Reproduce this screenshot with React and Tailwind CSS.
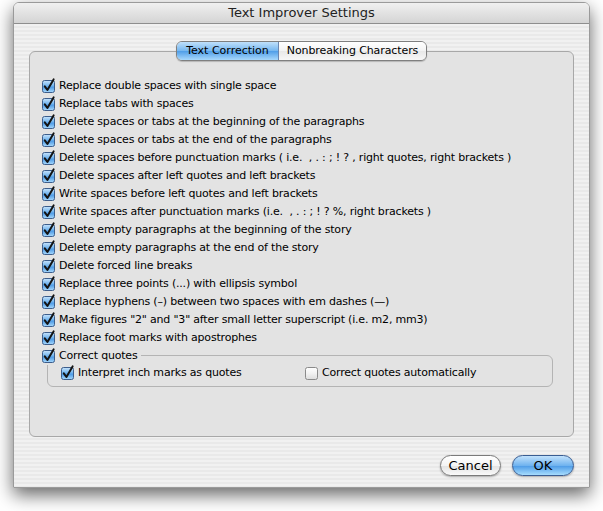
import React from 'react';

const options = [
  'Replace double spaces with single space',
  'Replace tabs with spaces',
  'Delete spaces or tabs at the beginning of the paragraphs',
  'Delete spaces or tabs at the end of the paragraphs',
  'Delete spaces before punctuation marks ( i.e.  , . : ; ! ? , right quotes, right brackets )',
  'Delete spaces after left quotes and left brackets',
  'Write spaces before left quotes and left brackets',
  'Write spaces after punctuation marks (i.e.  , . : ; ! ? %, right brackets )',
  'Delete empty paragraphs at the beginning of the story',
  'Delete empty paragraphs at the end of the story',
  'Delete forced line breaks',
  'Replace three points (...) with ellipsis symbol',
  'Replace hyphens (–) between two spaces with em dashes (—)',
  'Make figures "2" and "3" after small letter superscript (i.e. m2, mm3)',
  'Replace foot marks with apostrophes',
];

function Checkbox({ checked }) {
  return (
    <svg width="13" height="13" viewBox="0 0 13 13" className="shrink-0 overflow-visible">
      <defs>
        <linearGradient id="cbOn" x1="0" y1="0" x2="0" y2="1">
          <stop offset="0" stopColor="#c9e4fb" />
          <stop offset="0.45" stopColor="#6fb3ee" />
          <stop offset="0.55" stopColor="#4e9be6" />
          <stop offset="1" stopColor="#a9dafd" />
        </linearGradient>
        <linearGradient id="cbOff" x1="0" y1="0" x2="0" y2="1">
          <stop offset="0" stopColor="#ffffff" />
          <stop offset="0.5" stopColor="#f1f1f1" />
          <stop offset="1" stopColor="#dcdcdc" />
        </linearGradient>
      </defs>
      <rect
        x="0.5"
        y="0.5"
        width="12"
        height="12"
        rx="2"
        fill={checked ? 'url(#cbOn)' : 'url(#cbOff)'}
        stroke={checked ? '#3d5e8c' : '#8a8a8a'}
      />
      {checked && (
        <path d="M2.8 6.4 L5.4 10 L11.6 -0.6" fill="none" stroke="#141414" strokeWidth="2" strokeLinecap="round" strokeLinejoin="round" />
      )}
    </svg>
  );
}

function Row({ label, checked = true }) {
  return (
    <div className="flex h-[18px] items-center gap-[4px]">
      <Checkbox checked={checked} />
      <span className="whitespace-pre text-[11px] tracking-[-0.19px] text-black">{label}</span>
    </div>
  );
}

export default function App() {
  return (
    <div className="h-[511px] w-[603px] bg-white pl-[13px] pt-[2px] font-['DejaVu_Sans',sans-serif]">
      <div className="flex h-[486px] w-[577px] flex-col overflow-hidden rounded-t-[6px] border border-[#9a9a9a] shadow-[0_7px_18px_rgba(0,0,0,0.6)]">
        <div className="flex h-[21px] shrink-0 items-center justify-center border-b border-[#8e8e8e] bg-[linear-gradient(#f0f0f0,#d4d4d4)] text-[13px] text-[#222]">
          Text Improver Settings
        </div>

        <div className="flex flex-1 flex-col bg-[repeating-linear-gradient(180deg,#f1f1f1_0px,#f1f1f1_2px,#e9e9e9_2px,#e9e9e9_4px)] px-[15px] pt-[17px]">
          <div className="relative z-10 flex justify-center">
            <div className="flex h-[20px] overflow-hidden rounded-[6px] border border-[#7f7f7f] text-[11px] shadow-[0_1px_1px_rgba(0,0,0,0.2)]">
              <div className="flex w-[102px] items-center justify-center border-r border-[#6a86b0] bg-[linear-gradient(#bfe0fb,#74b6ef_50%,#4f9ee8_51%,#a8d8fc)] text-black">
                Text Correction
              </div>
              <div className="flex w-[147px] items-center justify-center bg-[linear-gradient(#ffffff,#f3f3f3_50%,#e8e8e8_51%,#f7f7f7)] tracking-[-0.1px] text-black">
                Nonbreaking Characters
              </div>
            </div>
          </div>

          <div className="-mt-[10px] h-[386px] rounded-[6px] border border-[#a8a8a8] bg-[#e3e3e3] pl-[12px] pr-[20px] pt-[25px]">
            {options.map((o) => (
              <Row key={o} label={o} />
            ))}
            <div className="relative z-10 flex">
              <div className="bg-[#e3e3e3] pr-[4px]">
                <Row label="Correct quotes" />
              </div>
            </div>
            <div className="-mt-[10px] ml-[5px] flex h-[32px] items-end rounded-[6px] border border-[#b4b4b4] pb-[4px] pl-[13px]">
              <div className="w-[244px]">
                <Row label="Interpret inch marks as quotes" />
              </div>
              <Row label="Correct quotes automatically" checked={false} />
            </div>
          </div>

          <div className="mt-[18px] flex justify-end gap-[11px]">
            <button className="flex h-[21px] w-[61px] items-center justify-center rounded-full border border-[#7a7a7a] bg-[linear-gradient(#ffffff,#f4f4f4_50%,#e2e2e2_51%,#fafafa)] text-[13px] text-black shadow-[0_1px_2px_rgba(0,0,0,0.3)]">
              Cancel
            </button>
            <button className="flex h-[21px] w-[62px] items-center justify-center rounded-full border border-[#3a5d92] bg-[linear-gradient(#c2e2fc,#70b3ef_50%,#4b9ae7_51%,#a6dcfd)] text-[13px] text-black shadow-[0_1px_2px_rgba(0,0,0,0.3)]">
              OK
            </button>
          </div>
        </div>
      </div>
    </div>
  );
}
